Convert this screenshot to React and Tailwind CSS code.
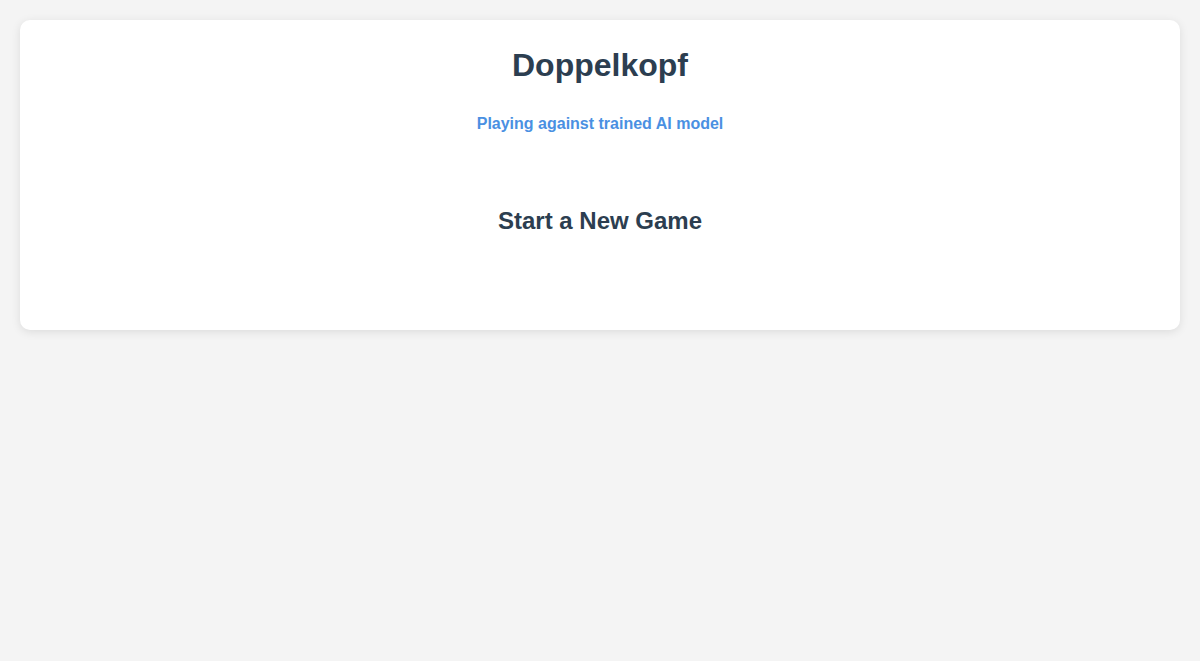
import React from "react";

function App() {
  return (
    <div className="min-h-screen bg-[#f4f4f4] p-5 font-['Liberation_Sans',Arial,sans-serif]">
      <div className="rounded-[10px] bg-white px-5 pt-[27px] pb-[95px] text-center shadow-[0_2px_10px_rgba(0,0,0,0.1)]">
        <h1 className="text-[32px] leading-[37px] font-bold text-[#2c3e50]">Doppelkopf</h1>
        <p className="mt-[31px] text-[16px] leading-[18px] font-bold text-[#4a90e2]">
          Playing against trained AI model
        </p>
        <h2 className="mt-[74px] text-[24px] leading-[28px] font-bold text-[#2c3e50]">
          Start a New Game
        </h2>
      </div>
    </div>
  );
}

export default App;
